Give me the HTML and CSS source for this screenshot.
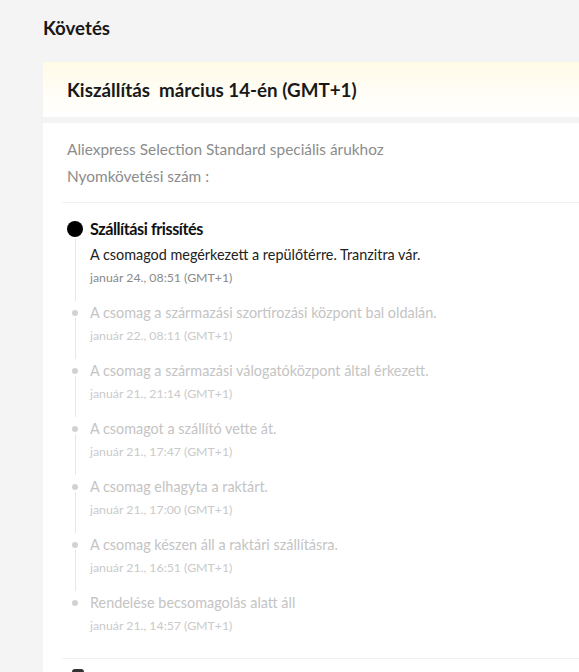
FILE: index.html
```html
<!DOCTYPE html>
<html lang="hu">
<head>
<meta charset="utf-8">
<title>Követés</title>
<link rel="stylesheet" href="styles.css">
</head>
<body>
<main class="page">
  <h1 class="page-title">Követés</h1>
  <section class="delivery-card">
    <h2 class="delivery-title">Kiszállítás&nbsp; március 14-én (GMT+1)</h2>
  </section>
  <section class="tracking-card">
    <div class="info">
      <p class="info-line">Aliexpress Selection Standard speciális árukhoz</p>
      <p class="info-line">Nyomkövetési szám :</p>
    </div>
    <div class="divider"></div>
    <ol class="timeline">
      <li class="event event-current">
        <div class="marker"><span class="dot dot-big"></span><span class="line"></span></div>
        <div class="event-body">
          <div class="event-title">Szállítási frissítés</div>
          <div class="event-desc">A csomagod megérkezett a repülőtérre. Tranzitra vár.</div>
          <div class="event-date">január 24., 08:51 (GMT+1)</div>
        </div>
      </li>
      <li class="event">
        <div class="marker"><span class="dot"></span><span class="line"></span></div>
        <div class="event-body">
          <div class="event-desc">A csomag a származási szortírozási központ bal oldalán.</div>
          <div class="event-date">január 22., 08:11 (GMT+1)</div>
        </div>
      </li>
      <li class="event">
        <div class="marker"><span class="dot"></span><span class="line"></span></div>
        <div class="event-body">
          <div class="event-desc">A csomag a származási válogatóközpont által érkezett.</div>
          <div class="event-date">január 21., 21:14 (GMT+1)</div>
        </div>
      </li>
      <li class="event">
        <div class="marker"><span class="dot"></span><span class="line"></span></div>
        <div class="event-body">
          <div class="event-desc">A csomagot a szállító vette át.</div>
          <div class="event-date">január 21., 17:47 (GMT+1)</div>
        </div>
      </li>
      <li class="event">
        <div class="marker"><span class="dot"></span><span class="line"></span></div>
        <div class="event-body">
          <div class="event-desc">A csomag elhagyta a raktárt.</div>
          <div class="event-date">január 21., 17:00 (GMT+1)</div>
        </div>
      </li>
      <li class="event">
        <div class="marker"><span class="dot"></span><span class="line"></span></div>
        <div class="event-body">
          <div class="event-desc">A csomag készen áll a raktári szállításra.</div>
          <div class="event-date">január 21., 16:51 (GMT+1)</div>
        </div>
      </li>
      <li class="event event-last">
        <div class="marker"><span class="dot"></span></div>
        <div class="event-body">
          <div class="event-desc">Rendelése becsomagolás alatt áll</div>
          <div class="event-date">január 21., 14:57 (GMT+1)</div>
        </div>
      </li>
    </ol>
    <div class="divider divider-bottom"></div>
    <div class="next-section"><span class="next-icon"></span></div>
  </section>
</main>
</body>
</html>
```
FILE: styles.css
```css
html, body {
  margin: 0;
  padding: 0;
  background: #f4f4f4;
  overflow: hidden;
}

.page {
  font-family: Lato, "Open Sans", sans-serif;
  padding: 0 0 0 43px;
  color: #191919;
  height: 672px;
}

.page-title {
  margin: 0;
  padding: 17px 0 0;
  height: 45px;
  box-sizing: border-box;
  font-size: 18.7px;
  line-height: 22px;
  font-weight: 700;
}

.delivery-card {
  margin-top: 17px;
  height: 55px;
  background: linear-gradient(to bottom, #fffbe6 0%, #fffdf3 45%, #ffffff 100%);
  padding: 0 0 0 24px;
  display: flex;
  align-items: center;
}

.delivery-title {
  margin: 0;
  font-size: 18.8px;
  font-weight: 700;
  line-height: 22px;
  color: #191919;
}

.tracking-card {
  margin-top: 6px;
  background: #fff;
  padding: 13px 0 0 24px;
  min-height: 600px;
}

.info-line {
  margin: 0;
  font-size: 15.4px;
  line-height: 27px;
  color: #8c8c8c;
}

.divider {
  height: 1px;
  background: #f0f0f0;
  margin: 12px 0 0 -5px;
}

.timeline {
  list-style: none;
  margin: 0;
  padding: 12px 0 0;
}

.event {
  display: grid;
  grid-template-columns: 16px 1fr;
  column-gap: 7px;
}

.marker {
  display: flex;
  flex-direction: column;
  align-items: center;
}

.dot {
  flex: none;
  width: 6px;
  height: 6px;
  border-radius: 50%;
  background: #d2d2d2;
  margin-top: 9px;
}

.dot-big {
  width: 16px;
  height: 16px;
  background: #000;
  margin-top: 6px;
}

.line {
  flex: 1;
  width: 1px;
  background: #e6e6e6;
  margin: 2px 0 0;
}

.event-body {
  padding-bottom: 12px;
}

.event-title {
  font-size: 16.2px;
  line-height: 28px;
  font-weight: 700;
  letter-spacing: -0.45px;
  color: #111;
}

.event-desc {
  font-size: 14.4px;
  line-height: 24px;
  color: #c4c4c4;
}

.event-date {
  font-size: 12.3px;
  line-height: 22px;
  color: #cacaca;
}

.event-current .event-desc {
  color: #222;
}

.event-current .event-date {
  color: #8a8a8a;
}

.divider-bottom {
  margin-top: 9px;
}

.next-section {
  padding: 10px 0 0 5px;
}

.next-icon {
  display: block;
  width: 12px;
  height: 14px;
  border-radius: 3px;
  background: #333;
}
```
